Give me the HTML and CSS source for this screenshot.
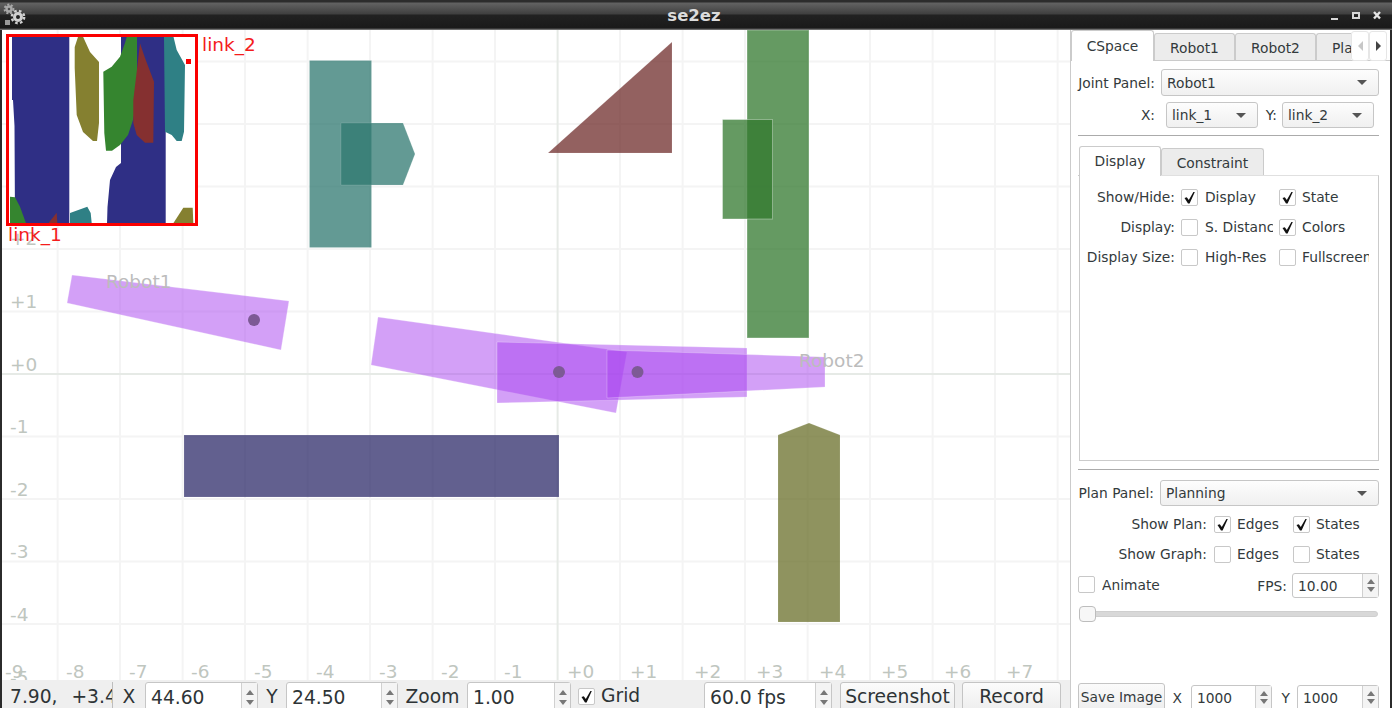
FILE: index.html
```html
<!DOCTYPE html>
<html>
<head>
	<meta name="viewport" content="width=device-width, initial-scale=1.0">
	<title>se2ez</title>
	<link rel="stylesheet" href="styles.css">
</head>
<body>
<svg class="defs">
	<symbol id="tick" viewBox="0 0 17 17"><path d="M3.5 9 L5.8 8.2 L7.8 11 L12.4 3 L13.8 3 L8.6 14.5 L7 14.5 Z"/></symbol>
</svg>
<div class="window">
	<div class="titlebar">
		<svg class="appicon" width="26" height="28" viewBox="0 0 26 28">
			<circle class="gear-big" cx="18" cy="16" r="3.5"/>
			<circle class="teeth-big" cx="18" cy="16" r="6.2"/>
			<circle class="gear-small" cx="9" cy="8" r="2.5"/>
			<circle class="teeth-small" cx="9" cy="8" r="4.4"/>
			<rect class="gear-box" x="5" y="19" width="5" height="5"/>
		</svg>
		<div class="title">se2ez</div>
		<svg class="winbtns" width="60" height="28" viewBox="0 0 60 28">
			<rect x="1" y="17" width="7" height="2"/>
			<path class="maxi" d="M23 12 h6 v5 h-6 Z"/>
			<path class="closex" d="M44 11 L50 17.5 M50 11 L44 17.5"/>
		</svg>
	</div>
	<div class="main">
		<div class="view">
			<svg class="canvas" width="1068" height="650" viewBox="2 30 1068 650">
				<g class="grid">
					<line x1="57.6" y1="30" x2="57.6" y2="680"/>
					<line x1="120" y1="30" x2="120" y2="680"/>
					<line x1="182.6" y1="30" x2="182.6" y2="680"/>
					<line x1="245" y1="30" x2="245" y2="680"/>
					<line x1="307.6" y1="30" x2="307.6" y2="680"/>
					<line x1="370" y1="30" x2="370" y2="680"/>
					<line x1="432.6" y1="30" x2="432.6" y2="680"/>
					<line x1="495" y1="30" x2="495" y2="680"/>
					<line x1="620" y1="30" x2="620" y2="680"/>
					<line x1="682.6" y1="30" x2="682.6" y2="680"/>
					<line x1="745" y1="30" x2="745" y2="680"/>
					<line x1="807.6" y1="30" x2="807.6" y2="680"/>
					<line x1="870" y1="30" x2="870" y2="680"/>
					<line x1="932.6" y1="30" x2="932.6" y2="680"/>
					<line x1="995" y1="30" x2="995" y2="680"/>
					<line x1="1057.6" y1="30" x2="1057.6" y2="680"/>
					<line x1="2" y1="61.5" x2="1070" y2="61.5"/>
					<line x1="2" y1="124" x2="1070" y2="124"/>
					<line x1="2" y1="186.5" x2="1070" y2="186.5"/>
					<line x1="2" y1="249" x2="1070" y2="249"/>
					<line x1="2" y1="311.5" x2="1070" y2="311.5"/>
					<line x1="2" y1="436.5" x2="1070" y2="436.5"/>
					<line x1="2" y1="499" x2="1070" y2="499"/>
					<line x1="2" y1="561.5" x2="1070" y2="561.5"/>
					<line x1="2" y1="624" x2="1070" y2="624"/>
				</g>
				<g class="axis">
					<line x1="557.6" y1="30" x2="557.6" y2="680"/>
					<line x1="2" y1="374" x2="1070" y2="374"/>
				</g>
				<g class="ticks">
					<text x="5" y="678">-9</text>
					<text x="66" y="678">-8</text>
					<text x="129" y="678">-7</text>
					<text x="191" y="678">-6</text>
					<text x="254" y="678">-5</text>
					<text x="316" y="678">-4</text>
					<text x="379" y="678">-3</text>
					<text x="441" y="678">-2</text>
					<text x="504" y="678">-1</text>
					<text x="567" y="678">+0</text>
					<text x="630" y="678">+1</text>
					<text x="694" y="678">+2</text>
					<text x="756" y="678">+3</text>
					<text x="819" y="678">+4</text>
					<text x="881" y="678">+5</text>
					<text x="944" y="678">+6</text>
					<text x="1006" y="678">+7</text>
					<text x="10" y="245">+2</text>
					<text x="10" y="308">+1</text>
					<text x="10" y="371">+0</text>
					<text x="10" y="433">-1</text>
					<text x="10" y="496">-2</text>
					<text x="10" y="558">-3</text>
					<text x="10" y="621">-4</text>
					<text x="10" y="684">-5</text>
				</g>
				<rect class="teal" x="309.5" y="60.5" width="62" height="187"/>
				<polygon class="teal" points="341,123 403,123 415,154 403,185 341,185"/>
				<polygon class="brown" points="548,153 672,153 672,42"/>
				<rect class="green" x="747" y="30" width="62" height="308"/>
				<rect class="green" x="722.5" y="119.5" width="50" height="99.5"/>
				<rect class="navy" x="184" y="435" width="375" height="62"/>
				<polygon class="olive" points="778,435 809,423 840,435 840,622 778,622"/>
				<polygon class="robot" points="72,275 289,301 281,350 67,303"/>
				<polygon class="robot" points="378,317 627,352 616,413 371,365"/>
				<polygon class="robot" points="497,342 747,348 747,397 497,403"/>
				<polygon class="robot" points="607,350 825,357 825,387 607,398"/>
				<circle class="joint" cx="254" cy="320" r="6"/>
				<circle class="joint" cx="559" cy="372" r="6"/>
				<circle class="joint" cx="637.5" cy="372" r="6"/>
				<g class="ticks names">
					<text x="106" y="288">Robot1</text>
					<text x="799" y="367">Robot2</text>
				</g>
				<g>
					<rect class="map" x="7.5" y="35.5" width="189" height="189"/>
					<polygon class="m-navy" points="12,36 69.3,36 69.3,224 15,224 14.5,126 13,100 12,100"/>
					<polygon class="m-navy" points="121,36 165.7,36 165.7,224 107,224 107.5,207 110,180 116,167 121,163"/>
					<polygon class="m-olive" points="78.3,36 82.7,36 90,52 99,62 99,123 97,141 93,141 83,132 76.7,115 74.7,68 74.7,47"/>
					<polygon class="m-green" points="127,36 137,36 137,100 133,120 128,135 120,145 112,150.7 106,150.7 104.3,133 103.3,71.7 111.7,66.7 120,56.7 125,43"/>
					<polygon class="m-red" points="140,43.3 145,58 154,81.7 153.3,142.7 145,142.7 136.7,135 133.3,123 133.3,100 136.7,71.7"/>
					<polygon class="m-teal" points="163.3,36 173.3,36 176.7,50 185,65 184,131.7 181.7,141 176.7,141 171.7,135 165,131.7 164,37"/>
					<polygon class="m-green" points="10,196.7 15,197.3 20,206.7 26,223.3 10,223.3"/>
					<polygon class="m-red" points="48.3,223.3 56.7,212.7 57.3,223.3"/>
					<polygon class="m-teal" points="70,223.3 70,213 78.3,210 87.3,206.7 90.7,213 91.7,223.3"/>
					<polygon class="m-olive" points="173.3,223.3 183.3,207.7 192.7,207.7 193.3,223.3"/>
					<rect class="map-frame" x="7.5" y="35.5" width="189" height="189"/>
					<rect class="map-dot" x="186" y="59" width="5" height="5"/>
					<text class="map-label" x="202" y="51">link_2</text>
					<text class="map-label" x="8" y="241">link_1</text>
				</g>
			</svg>
			<div class="bar">
				<div class="coord">7.90,  +3.4</div>
				<div class="blab w33">X</div>
				<div class="spin bspin w113"><span class="val">44.60</span><span class="arrows"><i class="up"></i><i class="dn"></i></span></div>
				<div class="blab w28">Y</div>
				<div class="spin bspin w112"><span class="val">24.50</span><span class="arrows"><i class="up"></i><i class="dn"></i></span></div>
				<div class="blab w69">Zoom</div>
				<div class="spin bspin w104"><span class="val">1.00</span><span class="arrows"><i class="up"></i><i class="dn"></i></span></div>
				<div class="check bcheck"><svg width="17" height="17"><use href="#tick"/></svg></div>
				<div class="gridlab">Grid</div>
				<div class="spin bspin w128"><span class="val">60.0 fps</span><span class="arrows"><i class="up"></i><i class="dn"></i></span></div>
				<div class="btn bbtn shot">Screenshot</div>
				<div class="btn bbtn rec">Record</div>
			</div>
		</div>
		<div class="panel">
			<div class="tabs">
				<div class="tab active t-cspace">CSpace</div>
				<div class="tab t-robot">Robot1</div>
				<div class="tab t-robot">Robot2</div>
				<div class="tab t-pla">Pla</div>
				<div class="tabscroll off"><i class="lft"></i></div>
				<div class="tabscroll"><i class="rgt"></i></div>
			</div>
			<div class="body">
				<div class="row r-joint">
					<div class="lab w77">Joint Panel:</div>
					<div class="combo grow">Robot1<i class="caret"></i></div>
				</div>
				<div class="row r-xy">
					<div class="lab w77">X:</div>
					<div class="combo c-link">link_1<i class="caret"></i></div>
					<div class="lab w19">Y:</div>
					<div class="combo c-link c-y">link_2<i class="caret"></i></div>
				</div>
				<div class="rule r1"></div>

				<div class="tabs inner">
					<div class="tab active t-display">Display</div>
					<div class="tab t-constraint">Constraint</div>
				</div>
				<div class="pane">
					<div class="optrow">
						<div class="lab w95">Show/Hide:</div>
						<div class="check"><svg width="17" height="17"><use href="#tick"/></svg></div>
						<div class="opt o68">Display</div>
						<div class="check"><svg width="17" height="17"><use href="#tick"/></svg></div>
						<div class="opt o67">State</div>
					</div>
					<div class="optrow">
						<div class="lab w95">Display:</div>
						<div class="check"></div>
						<div class="opt o68">S. Distance</div>
						<div class="check"><svg width="17" height="17"><use href="#tick"/></svg></div>
						<div class="opt o67">Colors</div>
					</div>
					<div class="optrow">
						<div class="lab w95">Display Size:</div>
						<div class="check"></div>
						<div class="opt o68">High-Res</div>
						<div class="check"></div>
						<div class="opt o67">Fullscreen</div>
					</div>
				</div>

				<div class="rule r2"></div>
				<div class="row r-plan">
					<div class="lab w76">Plan Panel:</div>
					<div class="combo grow">Planning<i class="caret"></i></div>
				</div>
				<div class="planrow first">
					<div class="lab w129">Show Plan:</div>
					<div class="check"><svg width="17" height="17"><use href="#tick"/></svg></div>
					<div class="opt o50">Edges</div>
					<div class="check"><svg width="17" height="17"><use href="#tick"/></svg></div>
					<div class="opt o50">States</div>
				</div>
				<div class="planrow">
					<div class="lab w129">Show Graph:</div>
					<div class="check"></div>
					<div class="opt o50">Edges</div>
					<div class="check"></div>
					<div class="opt o50">States</div>
				</div>
				<div class="row r-anim">
					<div class="check"></div>
					<div class="opt">Animate</div>
					<div class="lab fps">FPS:</div>
					<div class="spin w87"><span class="val">10.00</span><span class="arrows"><i class="up"></i><i class="dn"></i></span></div>
				</div>
				<div class="slider">
					<div class="groove"></div>
					<div class="handle"></div>
				</div>
				<div class="row r-save">
					<div class="btn save">Save Image</div>
					<div class="lab save-x">X</div>
					<div class="spin s-save w81"><span class="val">1000</span><span class="arrows"><i class="up"></i><i class="dn"></i></span></div>
					<div class="lab save-y">Y</div>
					<div class="spin s-save w82"><span class="val">1000</span><span class="arrows"><i class="up"></i><i class="dn"></i></span></div>
				</div>
			</div>
		</div>
	</div>
</div>
</body>
</html>
```
FILE: styles.css
```css
html, body {
	margin: 0;
	height: 100%;
	overflow: hidden;
	background: #fff;
}
body {
	font: 13.8px "DejaVu Sans", sans-serif;
	color: #333a3c;
}
.defs {
	display: none;
}
i {
	display: block;
}
.window {
	height: 708px;
	display: flex;
	flex-direction: column;
	border-left: 2px solid #2b2b2b;
	border-right: 2px solid #2b2b2b;
}

/* title bar */
.titlebar {
	height: 30px;
	margin: 0 -2px;
	flex: none;
	display: flex;
	align-items: center;
	background: linear-gradient(#2c2c2c 0, #2c2c2c 2px, #626262 3px, #3f3f3f 14px, #212121 15px, #1a1a1a 28px, #8a8a8a 30px);
}
.appicon {
	flex: none;
}
.gear-big {
	fill: none;
	stroke: #d0d0d0;
	stroke-width: 3;
}
.teeth-big {
	fill: none;
	stroke: #d0d0d0;
	stroke-width: 2.4;
	stroke-dasharray: 2.6 2.3;
}
.gear-small {
	fill: none;
	stroke: #a8a8a8;
	stroke-width: 2.4;
}
.teeth-small {
	fill: none;
	stroke: #a8a8a8;
	stroke-width: 2;
	stroke-dasharray: 2 1.7;
}
.gear-box {
	fill: #9a9a9a;
}
.title {
	flex: 1;
	text-align: center;
	padding-left: 32px;
	font-size: 16.5px;
	font-weight: bold;
	color: #dcdcdc;
}
.winbtns {
	flex: none;
	margin-right: 2px;
	fill: #d8d8d8;
}
.maxi {
	fill: none;
	stroke: #d8d8d8;
	stroke-width: 2;
}
.closex {
	fill: none;
	stroke: #e4e4e4;
	stroke-width: 2.4;
}

.main {
	flex: 1;
	display: flex;
	min-height: 0;
}
.view {
	width: 1068px;
	flex: none;
}

/* canvas */
.canvas {
	display: block;
	background: #fff;
}
.grid line {
	stroke: #f4f4f4;
	stroke-width: 2;
}
.axis line {
	stroke: #e6eae6;
	stroke-width: 2;
}
.ticks text {
	font: 18.5px "DejaVu Sans", sans-serif;
	fill: #bfc6bf;
}
.names text {
	fill: #bcbcbc;
}
.teal, .brown, .green, .navy, .olive {
	fill-opacity: .75;
	stroke: #fff;
	stroke-opacity: .12;
}
.green {
	stroke-opacity: .35;
}
.teal { fill: #2f7870; }
.brown { fill: #6f2c2b; }
.green { fill: #32782e; }
.navy { fill: #2e2b6a; }
.olive { fill: #6a6f2a; }
.robot {
	fill: #a741ef;
	fill-opacity: .5;
	stroke: #fff;
	stroke-opacity: .25;
}
.joint {
	fill: #7d5a95;
}
.map { fill: #fff; }
.m-navy { fill: #2f2f85; }
.m-olive { fill: #858030; }
.m-green { fill: #35852f; }
.m-red { fill: #853030; }
.m-teal { fill: #2f8085; }
.map-frame {
	fill: none;
	stroke: #fa0000;
	stroke-width: 3;
}
.map-dot { fill: #fa0000; }
.map-label {
	font: 18.5px "DejaVu Sans", sans-serif;
	fill: #f41c1c;
}

/* bottom bar */
.bar {
	height: 28px;
	display: flex;
	align-items: flex-start;
	padding-top: 2px;
	box-sizing: border-box;
	background: #efefef;
	font-size: 18.7px;
	color: #2e3436;
	overflow: hidden;
}
.coord {
	width: 102px;
	height: 30px;
	padding-left: 8px;
	white-space: pre;
	word-spacing: 1px;
	overflow: hidden;
	border-right: 1px solid #bdbdbd;
	line-height: 29px;
	flex: none;
}
.blab {
	flex: none;
	text-align: center;
	line-height: 29px;
}
.w33 { width: 32px; }
.w28 { width: 28px; }
.w69 { width: 69px; }
.w113 { width: 113px; }
.w112 { width: 112px; }
.w104 { width: 104px; }
.w128 { width: 128px; }
.w87 { width: 87px; }
.w81 { width: 81px; }
.w82 { width: 82px; }

.spin {
	flex: none;
	display: flex;
	box-sizing: border-box;
	height: 25px;
	background: #fff;
	border: 1px solid #c6c6c6;
	border-radius: 3px;
}
.bspin {
	height: 32px;
	line-height: 29px;
}
.val {
	flex: 1;
	padding-left: 5px;
	overflow: hidden;
	white-space: nowrap;
}
.r-anim .val, .s-save .val {
	line-height: 25px;
}
.arrows {
	width: 16px;
	flex: none;
	border-left: 1px solid #d0d0d0;
	background: #f4f4f4;
	display: flex;
	flex-direction: column;
	align-items: center;
	padding-top: 5px;
	box-sizing: border-box;
	gap: 3px;
}
.bspin .arrows {
	padding-top: 7px;
	gap: 5px;
}
.up {
	border: 4px solid transparent;
	border-top: 0;
	border-bottom: 5px solid #777;
}
.dn {
	border: 4px solid transparent;
	border-bottom: 0;
	border-top: 5px solid #777;
}
.check {
	flex: none;
	box-sizing: border-box;
	width: 17px;
	height: 17px;
	background: #fff;
	border: 1px solid #c8c8c8;
	border-radius: 2px;
	fill: #111;
}
.check svg {
	display: block;
	margin: -1px;
}
.bcheck {
	margin: 6px 0 0 7px;
}
.gridlab {
	flex: none;
	width: 103px;
	margin-left: 6px;
	line-height: 28px;
}
.btn {
	flex: none;
	box-sizing: border-box;
	text-align: center;
	background: linear-gradient(#fbfbfb, #ececec);
	border: 1px solid #c4c4c4;
	border-radius: 3px;
	white-space: nowrap;
}
.bbtn {
	height: 32px;
	line-height: 27px;
}
.shot {
	width: 115px;
	margin-left: 8px;
}
.rec {
	width: 99px;
	margin-left: 7px;
}

/* right panel */
.panel {
	width: 320px;
	flex: none;
	box-sizing: border-box;
	border-left: 1px solid #cbcbcb;
	background: #fff;
	overflow: hidden;
}
.tabs {
	display: flex;
	align-items: flex-end;
	height: 31px;
	box-sizing: border-box;
	border-bottom: 1px solid #cbcbcb;
}
.tab {
	box-sizing: border-box;
	height: 27px;
	line-height: 28px;
	text-align: center;
	background: #ececec;
	border: 1px solid #cbcbcb;
	border-bottom: 0;
	border-radius: 3px 3px 0 0;
	overflow: hidden;
	flex: none;
}
.tab.active {
	height: 31px;
	line-height: 30px;
	background: #fff;
	margin-bottom: -1px;
}
.t-cspace { width: 83px; }
.t-robot { width: 81px; }
.t-pla {
	width: 35px;
	text-align: left;
	padding-left: 15px;
	border-right: 0;
	border-radius: 3px 0 0 0;
}
.tabscroll {
	flex: none;
	box-sizing: border-box;
	width: 18px;
	height: 30px;
	background: #fff;
	border: 1px solid #e6e6e6;
	border-radius: 3px;
	display: flex;
	align-items: center;
	justify-content: center;
	margin-bottom: -1px;
}
.tabscroll.off i { opacity: .3; }
.lft {
	border: 5px solid transparent;
	border-left: 0;
	border-right: 5px solid #444;
}
.rgt {
	border: 5px solid transparent;
	border-right: 0;
	border-left: 5px solid #444;
}
.body {
	padding: 0 11px 0 7px;
}
.row {
	display: flex;
	align-items: center;
}
.lab {
	flex: none;
	text-align: right;
	white-space: nowrap;
}
.w77 { width: 77px; }
.w76 { width: 76px; }
.w19 { width: 19px; }
.w95 { width: 95px; }
.w129 { width: 129px; }
.r-joint {
	margin-top: 8px;
	height: 27px;
}
.r-xy {
	margin-top: 6px;
	height: 26px;
}
.combo {
	box-sizing: border-box;
	height: 100%;
	display: flex;
	align-items: center;
	justify-content: space-between;
	padding: 0 11px 0 5px;
	background: linear-gradient(#fdfdfd, #f0f0f0);
	border: 1px solid #c6c6c6;
	border-radius: 3px;
	margin-left: 6px;
}
.grow {
	flex: 1;
}
.c-link {
	width: 92px;
	flex: none;
	margin-left: 11px;
}
.c-y {
	margin-left: 5px;
}
.caret {
	border: 5px solid transparent;
	border-bottom: 0;
	border-top: 5px solid #555;
}
.rule {
	height: 1px;
	background: #ababab;
}
.r1 {
	margin-top: 7px;
}
.inner {
	margin-top: 10px;
	height: 30px;
	padding-left: 1px;
}
.t-display.active { width: 82px; height: 30px; line-height: 29px; }
.t-constraint { width: 103px; }
.pane {
	box-sizing: border-box;
	height: 286px;
	margin-top: -1px;
	padding-top: 6px;
	margin-left: 1px;
	border: 1px solid #cbcbcb;
	border-top-color: #e0e0e0;
}
.optrow, .planrow {
	display: flex;
	align-items: center;
	height: 30px;
}
.optrow .check {
	margin-left: 6px;
}
.optrow .opt {
	margin-left: 7px;
}
.planrow.first {
	margin-top: 3px;
}
.planrow .check {
	margin-left: 6px;
}
.planrow .lab + .check {
	margin-left: 7px;
}
.planrow .opt {
	margin-left: 6px;
}
.opt {
	flex: none;
	overflow: hidden;
	white-space: nowrap;
}
.optrow .o68 { width: 68px; }
.optrow .o67 { width: 67px; margin-left: 6px; }
.o50 { width: 50px; }
.r2 {
	margin-top: 8px;
}
.r-plan {
	margin-top: 10px;
	height: 26px;
}
.r-anim {
	margin-top: 4px;
	height: 25px;
}
.r-anim .check {
	margin-top: -2px;
}
.r-anim .opt {
	margin: -2px 0 0 7px;
}
.fps {
	margin-left: auto;
	margin-right: 5px;
}
.slider {
	position: relative;
	margin: 8px 1px 0;
	height: 16px;
	display: flex;
	align-items: center;
}
.groove {
	flex: 1;
	height: 6px;
	border-radius: 3px;
	background: #d8d8d8;
	border: 1px solid #cfcfcf;
	box-sizing: border-box;
}
.handle {
	position: absolute;
	left: 0;
	top: 0;
	width: 17px;
	height: 16px;
	box-sizing: border-box;
	background: #f7f7f7;
	border: 1px solid #bdbdbd;
	border-radius: 4px;
}
.r-save {
	margin-top: 61px;
	align-items: flex-start;
	height: 32px;
}
.save {
	width: 87px;
	height: 32px;
	line-height: 26px;
}
.r-save .lab {
	line-height: 30px;
}
.save-x {
	width: 17px;
	padding-right: 2px;
}
.save-y {
	width: 18px;
}
.s-save {
	height: 30px;
	margin: 2px 0 0 7px;
}
```
